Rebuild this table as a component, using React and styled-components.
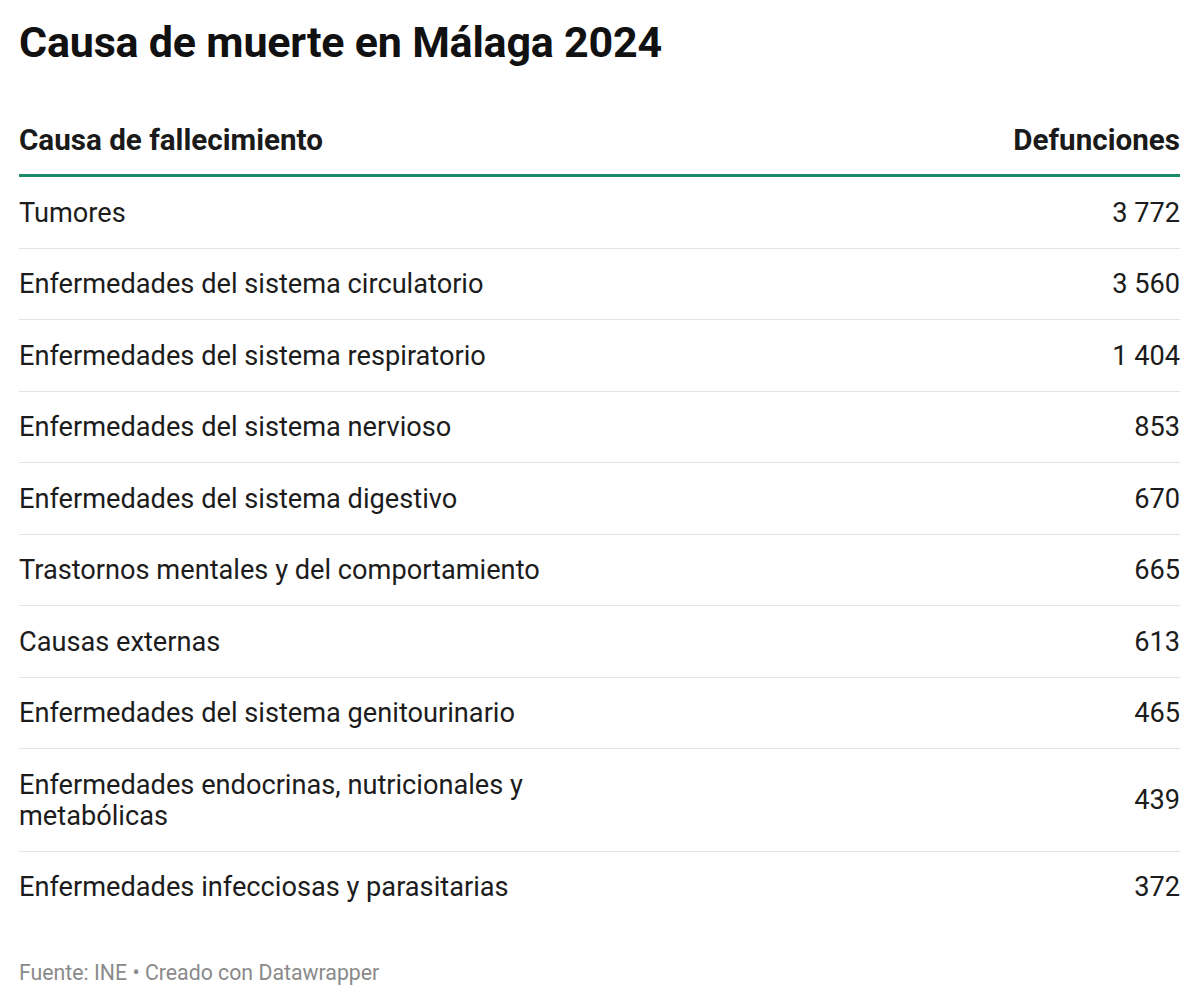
import React from 'react';
import styled, { createGlobalStyle } from 'styled-components';

const GlobalStyle = createGlobalStyle`
  body {
    margin: 0;
    background: #ffffff;
    font-family: Roboto, 'Liberation Sans', sans-serif;
    color: #181818;
  }
`;

const Chart = styled.div`
  padding: 13px 20px 0 19px;
  width: 1200px;
  box-sizing: border-box;
`;

const Title = styled.h1`
  margin: 0;
  font-size: 43px;
  font-weight: 700;
  line-height: 58px;
  letter-spacing: -0.2px;
  color: #111111;
`;

const Table = styled.table`
  width: 100%;
  margin-top: 51px;
  border-collapse: collapse;
`;

const HeadCell = styled.th`
  padding: 0 0 16px;
  font-size: 29.6px;
  font-weight: 700;
  line-height: 36px;
  color: #1a1a1a;
  text-align: ${p => (p.$num ? 'right' : 'left')};
  border-bottom: 3px solid #1a8a6c;
`;

const Row = styled.tr`
  border-top: 1px solid #e4e4e4;

  &:first-child {
    border-top: none;
  }
`;

const Cell = styled.td`
  padding: 20.5px 0 19px;
  font-size: 27.2px;
  line-height: 31px;
  color: #1c1c1c;
  vertical-align: middle;
  text-align: ${p => (p.$num ? 'right' : 'left')};
  width: ${p => (p.$num ? 'auto' : '560px')};
`;

const Footer = styled.div`
  margin-top: 37px;
  font-size: 21.3px;
  line-height: 28px;
  color: #8a8a8a;
`;

const rows = [
  ['Tumores', '3 772'],
  ['Enfermedades del sistema circulatorio', '3 560'],
  ['Enfermedades del sistema respiratorio', '1 404'],
  ['Enfermedades del sistema nervioso', '853'],
  ['Enfermedades del sistema digestivo', '670'],
  ['Trastornos mentales y del comportamiento', '665'],
  ['Causas externas', '613'],
  ['Enfermedades del sistema genitourinario', '465'],
  ['Enfermedades endocrinas, nutricionales y metabólicas', '439'],
  ['Enfermedades infecciosas y parasitarias', '372'],
];

const App = () => (
  <Chart>
    <GlobalStyle />
    <Title>Causa de muerte en Málaga 2024</Title>
    <Table>
      <thead>
        <tr>
          <HeadCell>Causa de fallecimiento</HeadCell>
          <HeadCell $num>Defunciones</HeadCell>
        </tr>
      </thead>
      <tbody>
        {rows.map(([cause, value]) => (
          <Row key={cause}>
            <Cell>{cause}</Cell>
            <Cell $num>{value}</Cell>
          </Row>
        ))}
      </tbody>
    </Table>
    <Footer>Fuente: INE • Creado con Datawrapper</Footer>
  </Chart>
);

export default App;
